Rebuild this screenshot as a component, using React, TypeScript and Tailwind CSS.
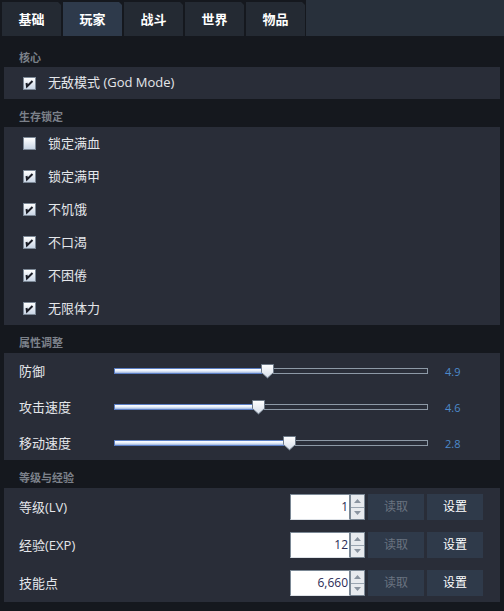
import React from 'react'

const tabs = ['基础', '玩家', '战斗', '世界', '物品']

const survival: [string, boolean][] = [
  ['锁定满血', false],
  ['锁定满甲', true],
  ['不饥饿', true],
  ['不口渴', true],
  ['不困倦', true],
  ['无限体力', true],
]

const sliders = [
  { label: '防御', value: 4.9, max: 10 },
  { label: '攻击速度', value: 4.6, max: 10 },
  { label: '移动速度', value: 2.8, max: 5 },
]

const stats = [
  { label: '等级(LV)', value: '1' },
  { label: '经验(EXP)', value: '12' },
  { label: '技能点', value: '6,660' },
]

function SectionLabel({ text, first }: { text: string; first?: boolean }) {
  return (
    <div className={`${first ? 'h-[31px] pt-[11px]' : 'h-[28px] pt-[6px]'} flex items-center pl-[15px]`}>
      <span className="text-[11px] font-semibold text-[#7c818a] leading-none">{text}</span>
    </div>
  )
}

function CheckBox({ checked }: { checked: boolean }) {
  return (
    <div className="w-[13px] h-[13px] border border-[#7d8997] bg-gradient-to-b from-white to-[#c9d5e5] flex items-center justify-center">
      {checked && (
        <svg width="11" height="11" viewBox="0 0 11 11">
          <polyline points="2.5,5 3,8.5 8.5,3" fill="none" stroke="#1b1d26" strokeWidth="2" />
        </svg>
      )}
    </div>
  )
}

function CheckRow({ label, checked }: { label: string; checked: boolean }) {
  return (
    <div className="h-[33px] flex items-center pl-[19px] gap-[12px]">
      <CheckBox checked={checked} />
      <span className="text-[13px] text-[#e4e6ea] leading-none -mt-[1px]">{label}</span>
    </div>
  )
}

function Slider({ value, max }: { value: number; max: number }) {
  const pos = 6.5 + (value / max) * 301
  return (
    <div className="relative w-[314px] h-[16px]">
      <div className="absolute left-0 right-0 top-[5px] h-[6px] border border-[#8d99a6] bg-[#2a2e39]" />
      <div
        className="absolute left-0 top-[5px] h-[6px] border border-[#5b7ec4] bg-gradient-to-b from-white via-[#e6eefa] to-[#9fb6de]"
        style={{ width: pos }}
      />
      <svg className="absolute top-[1px]" style={{ left: pos - 6.5 }} width="13" height="15" viewBox="0 0 13 15">
        <defs>
          <linearGradient id="tg" x1="0" y1="0" x2="0" y2="1">
            <stop offset="0" stopColor="#ffffff" />
            <stop offset="1" stopColor="#d5dde9" />
          </linearGradient>
        </defs>
        <polygon points="0.5,0.5 12.5,0.5 12.5,8.5 6.5,14 0.5,8.5" fill="url(#tg)" stroke="#6d7987" />
      </svg>
    </div>
  )
}

function SpinBox({ value }: { value: string }) {
  return (
    <div className="flex h-[26px]">
      <div className="w-[60px] h-full bg-white border border-[#7b8895] border-b-[#dfe3e8] flex items-center justify-end pr-[1px]">
        <span className="text-[12px] text-[#2a2a55] leading-none">{value}</span>
      </div>
      <div className="w-[15px] h-full flex flex-col border border-[#7b8895] bg-[#e7eaee]">
        <div className="flex-1 flex items-center justify-center border-b border-[#9aa5b1]">
          <svg width="7" height="4" viewBox="0 0 7 4"><polygon points="0,4 3.5,0 7,4" fill="#8a94a0" /></svg>
        </div>
        <div className="flex-1 flex items-center justify-center">
          <svg width="7" height="4" viewBox="0 0 7 4"><polygon points="0,0 3.5,4 7,0" fill="#8a94a0" /></svg>
        </div>
      </div>
    </div>
  )
}

export default function App() {
  return (
    <div className="w-[504px] h-[611px] bg-[#15181e] overflow-hidden font-['Open_Sans','Noto_Sans_CJK_SC',sans-serif]">
      {/* Tab bar */}
      <div className="flex h-[36px]">
        <div className="flex gap-[2px] pl-[2px] pt-[2px] pr-[1px] bg-[#15181e]">
          {tabs.map((t, i) => (
            <div
              key={t}
              className={`w-[59px] h-[34px] flex items-center justify-center [clip-path:polygon(0_0,calc(100%-3px)_0,100%_3px,100%_100%,0_100%)] ${i === 1 ? 'bg-[#2e3a4b]' : 'bg-[#242a33]'}`}
            >
              <span className="text-[13px] font-bold text-white leading-none">{t}</span>
            </div>
          ))}
        </div>
        <div className="flex-1 bg-[#28303b]" />
      </div>

      <div className="px-[4px]">
        <SectionLabel text="核心" first />
        <div className="bg-[#292d38]">
          <div className="h-[32px] flex items-center pl-[19px] gap-[12px]">
            <CheckBox checked />
            <span className="text-[13px] text-[#e4e6ea] leading-none -mt-[1px]">无敌模式 (God Mode)</span>
          </div>
        </div>

        <SectionLabel text="生存锁定" />
        <div className="bg-[#292d38]">
          {survival.map(([l, c]) => (
            <CheckRow key={l} label={l} checked={c} />
          ))}
        </div>

        <SectionLabel text="属性调整" />
        <div className="bg-[#292d38] h-[107px]">
          {sliders.map((s) => (
            <div key={s.label} className="h-[36px] flex items-center pl-[15px]">
              <span className="w-[95px] text-[13px] text-[#e4e6ea] leading-none">{s.label}</span>
              <Slider value={s.value} max={s.max} />
              <span className="ml-[17px] text-[11px] text-[#4d8acb] leading-none">{s.value}</span>
            </div>
          ))}
        </div>

        <SectionLabel text="等级与经验" />
        <div className="bg-[#292d38]">
          {stats.map((s) => (
            <div key={s.label} className="h-[38px] flex items-center pl-[15px] pr-[17px]">
              <span className="text-[13px] text-[#e4e6ea] leading-none">{s.label}</span>
              <div className="ml-auto flex items-center gap-[2px]">
                <SpinBox value={s.value} />
                <button className="ml-[1px] w-[56px] h-[26px] bg-[#2f3a4a] text-[12px] text-[#6a7380]">读取</button>
                <button className="ml-[1px] w-[56px] h-[26px] bg-[#2f3a4a] text-[12px] text-white">设置</button>
              </div>
            </div>
          ))}
        </div>
      </div>
    </div>
  )
}
